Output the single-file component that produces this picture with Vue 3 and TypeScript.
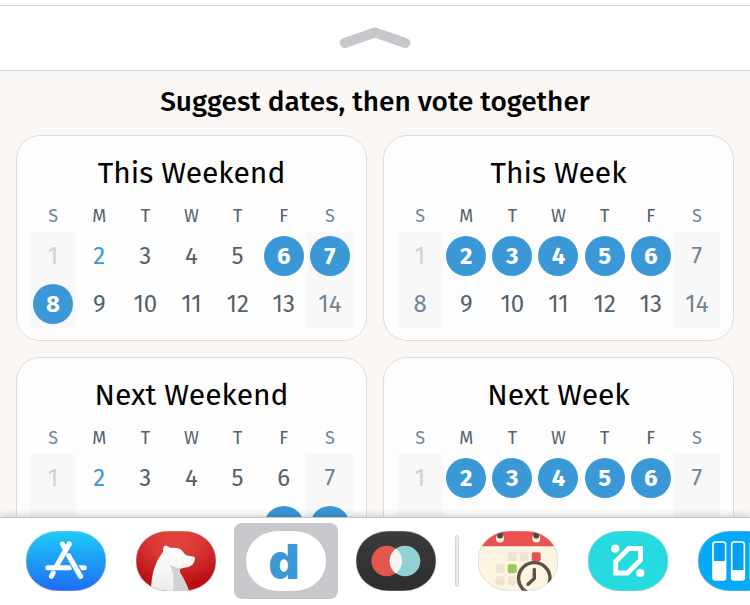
<script setup lang="ts">
interface Suggestion {
  title: string
  picked: number[]
  today?: number
}

const weekdays: string[] = ['S', 'M', 'T', 'W', 'T', 'F', 'S']
const weeks: number[][] = [
  [1, 2, 3, 4, 5, 6, 7],
  [8, 9, 10, 11, 12, 13, 14],
]
const suggestions: Suggestion[] = [
  { title: 'This Weekend', picked: [6, 7, 8], today: 2 },
  { title: 'This Week', picked: [2, 3, 4, 5, 6] },
  { title: 'Next Weekend', picked: [13, 14], today: 2 },
  { title: 'Next Week', picked: [2, 3, 4, 5, 6] },
]

const pill = 'M0 30C0 12 15 0 33 0H47C65 0 80 12 80 30C80 48 65 60 47 60H33C15 60 0 48 0 30Z'

function dayClass(s: Suggestion, day: number) {
  return {
    picked: s.picked.includes(day),
    today: s.today === day,
    past: day === 1,
  }
}
</script>

<template>
  <div class="screen">
    <header class="top">
      <button class="expand" type="button" aria-label="Expand">
        <svg width="72" height="24" viewBox="0 0 72 24">
          <path d="M5.700 17L36 6.500L66.300 17" fill="none" stroke="#c7c6cb" stroke-width="9.800" stroke-linecap="round" stroke-linejoin="round" />
        </svg>
      </button>
    </header>

    <main class="content">
      <h1>Suggest dates, then vote together</h1>
      <div class="cards">
        <section v-for="s in suggestions" :key="s.title" class="card">
          <h2>{{ s.title }}</h2>
          <table>
            <thead>
              <tr>
                <th v-for="(d, i) in weekdays" :key="i" scope="col">{{ d }}</th>
              </tr>
            </thead>
            <tbody>
              <tr v-for="(week, w) in weeks" :key="w">
                <td v-for="day in week" :key="day">
                  <span class="day" :class="dayClass(s, day)">{{ day }}</span>
                </td>
              </tr>
            </tbody>
          </table>
        </section>
      </div>
    </main>

    <nav class="dock" aria-label="Apps">
      <button class="app" type="button" aria-label="App Store">
        <svg viewBox="0 0 80 60">
          <defs>
            <linearGradient id="store" x1="0" y1="0" x2="0" y2="1">
              <stop offset="0" stop-color="#1dcdfb" />
              <stop offset="1" stop-color="#1f6bf2" />
            </linearGradient>
          </defs>
          <path :d="pill" fill="url(#store)" />
          <g fill="none" stroke="#fff" stroke-width="5" stroke-linecap="round">
            <path d="M21.800 36.700H43.500M53 36.700H58.300M36.500 13L39 17.500M43.200 13L30.500 35M27.200 42L25.400 45.200" />
            <path d="M41 21L55 46" stroke="#1f9bf7" stroke-width="7.400" stroke-linecap="butt" />
            <path d="M43.200 13L37 23.700M42.600 24.500L54.600 45.500" />
          </g>
          <path class="outline" :d="pill" />
        </svg>
      </button>
      <button class="app" type="button" aria-label="Bear">
        <svg viewBox="0 0 80 60">
          <defs>
            <radialGradient id="bear" cx=".5" cy=".15" r=".75">
              <stop offset="0" stop-color="#e5443e" />
              <stop offset=".45" stop-color="#d93733" />
              <stop offset="1" stop-color="#b90f16" />
            </radialGradient>
            <linearGradient id="fur" x1="0" y1="0" x2="0" y2="1">
              <stop offset="0" stop-color="#fff" />
              <stop offset="1" stop-color="#ececec" />
            </linearGradient>
            <clipPath id="clip"><path :d="pill" /></clipPath>
          </defs>
          <path :d="pill" fill="url(#bear)" />
          <g clip-path="url(#clip)">
            <path d="M15 60C15 44 19 31 27 21C27 17 27.500 15 29 14.500C31 14.500 33 16 34.500 17C39 16.200 44 17 46.500 20C48 22 49 23.500 51 24.500L58 25.800C60 27 58.500 31 57 33C54 36.500 49 36.500 45 37.500C42.500 38.500 44 42 46 45C49 50 51 55 53 60Z" fill="url(#fur)" />
            <path d="M31 30C34 35 39 36.500 45 37.500C42.500 38.500 44 42 46 45C49 50 51 55 53 60H37C38.500 49 38 38 31 30Z" fill="#d2d1d1" />
          </g>
          <path class="outline" :d="pill" />
        </svg>
      </button>
      <button class="app selected" type="button" aria-label="Dates" aria-pressed="true">
        <svg viewBox="0 0 80 60">
          <path :d="pill" fill="#fff" />
          <text class="logo" x="38" y="48" text-anchor="middle">d</text>
        </svg>
      </button>
      <button class="app" type="button" aria-label="Overlap">
        <svg viewBox="0 0 80 60">
          <defs>
            <linearGradient id="dark" x1="0" y1="0" x2="0" y2="1">
              <stop offset="0" stop-color="#3b3a3d" />
              <stop offset="1" stop-color="#2d2c2f" />
            </linearGradient>
          </defs>
          <path :d="pill" fill="url(#dark)" />
          <circle cx="30.700" cy="30" r="15.300" fill="#e1564f" />
          <circle cx="49" cy="30" r="15.300" fill="#90d2d3" />
          <path d="M39.850 17.700A15.300 15.300 0 0 1 39.850 42.300A15.300 15.300 0 0 1 39.850 17.700Z" fill="#f3f3f1" />
          <path class="outline" :d="pill" />
        </svg>
      </button>

      <span class="divider"></span>

      <button class="app" type="button" aria-label="Schedule">
        <svg viewBox="0 0 80 60">
          <g clip-path="url(#clip)">
            <rect width="80" height="60" fill="#fdf5e2" />
            <rect width="80" height="15" fill="#eb5150" />
            <rect y="15" width="80" height="1" fill="#e3d3c3" />
            <g fill="#fdf5e2">
              <circle cx="22" cy="7.500" r="4" />
              <circle cx="58.300" cy="7.500" r="4" />
            </g>
            <g fill="#51493f">
              <rect x="19.200" y="-3" width="5.600" height="10.500" rx="2" />
              <rect x="55.500" y="-3" width="5.600" height="10.500" rx="2" />
            </g>
            <g fill="#efe3d2">
              <rect x="29.700" y="21.300" width="9" height="9" rx="2" />
              <rect x="41.700" y="21.300" width="9" height="9" rx="2" />
              <rect x="17.700" y="33.300" width="9" height="9" rx="2" />
              <rect x="17.700" y="45.300" width="9" height="9" rx="2" />
              <rect x="29.700" y="45.300" width="9" height="9" rx="2" />
            </g>
            <rect x="53.700" y="21.300" width="9" height="9" rx="2" fill="#eb5150" />
            <rect x="29.700" y="33.300" width="9" height="9" rx="2" fill="#9cc958" />
            <circle cx="56.300" cy="47.300" r="15.700" fill="#fdf5e2" stroke="#5a5247" stroke-width="3.400" />
            <path d="M56.300 38.500V47.600L50 53.300" fill="none" stroke="#5a5247" stroke-width="3.400" stroke-linecap="round" stroke-linejoin="round" />
          </g>
          <path class="outline" :d="pill" />
        </svg>
      </button>
      <button class="app" type="button" aria-label="Sketch">
        <svg viewBox="0 0 80 60">
          <path :d="pill" fill="#26dbdf" />
          <path d="M40.700 17.500H52.500V29L39.500 42H27.700V30.500Z" fill="none" stroke="#fff" stroke-width="4.800" />
          <circle cx="27.300" cy="17.700" r="4.100" fill="#fff" />
          <circle cx="52.300" cy="42" r="4.100" fill="#fff" />
          <path class="outline" :d="pill" />
        </svg>
      </button>
      <button class="app" type="button" aria-label="Boards">
        <svg viewBox="0 0 80 60">
          <path :d="pill" fill="#04a9f8" />
          <g fill="#04a0ee" stroke="#fff" stroke-width="1.600">
            <rect x="15" y="11" width="12.600" height="38" rx="2.500" />
            <rect x="33.700" y="11" width="12.600" height="38" rx="2.500" />
            <rect x="52.400" y="11" width="12.600" height="38" rx="2.500" />
          </g>
          <g fill="#fff">
            <rect x="15" y="30" width="12.600" height="19" rx="1" />
            <rect x="33.700" y="39" width="12.600" height="10" rx="1" />
            <rect x="52.400" y="25" width="12.600" height="24" rx="1" />
          </g>
          <path class="outline" :d="pill" />
        </svg>
      </button>
    </nav>
  </div>
</template>

<style>
body {
  margin: 0;
}
</style>

<style scoped>
.screen {
  display: flex;
  flex-direction: column;
  height: 100vh;
  overflow: hidden;
  background: #fbf7f5;
  color: #000;
  font-family: 'Fira Sans', 'Noto Sans', sans-serif;
}
button {
  padding: 0;
  border: 0;
  background: none;
}
svg {
  display: block;
}
.top {
  flex: none;
  padding-top: 5px;
  border-bottom: 1px solid #d0d0d3;
  background: #fff;
}
.expand {
  display: flex;
  align-items: center;
  justify-content: center;
  width: 100%;
  height: 65px;
  border-top: 1px solid #d0d0d3;
}
.content {
  flex: 1;
  min-height: 0;
  overflow: hidden;
  padding: 0 16px;
}
h1 {
  margin: 0;
  padding: 11px 0 13px;
  font-size: 28px;
  font-weight: 500;
  line-height: 40px;
  text-align: center;
}
.cards {
  display: grid;
  grid-template-columns: 1fr 1fr;
  gap: 16px;
}
.card {
  padding: 16px 13px 12px;
  border: 1px solid #dddddf;
  border-radius: 24px;
  background: #fdfdfd;
}
h2 {
  margin: 0;
  font-size: 30px;
  font-weight: 400;
  line-height: 42px;
  text-align: center;
}
table {
  width: 100%;
  table-layout: fixed;
  border-collapse: collapse;
  color: #53626c;
}
th {
  height: 32px;
  padding: 6px 0 0;
  font-size: 18px;
  font-weight: 400;
  line-height: 24px;
}
td {
  height: 48px;
  padding: 0;
  font-size: 24px;
  text-align: center;
}
th:first-child,
th:last-child,
td:first-child,
td:last-child {
  color: #748591;
}
td:first-child,
td:last-child {
  background: #f8f8f8;
}
.day {
  display: block;
  width: 40px;
  margin: 0 auto;
  border-radius: 50%;
  line-height: 40px;
}
.past {
  color: #ccd2d6;
}
.today {
  color: #3998d5;
}
.picked {
  background: #3998d5;
  color: #fff;
  font-weight: 700;
}
.dock {
  position: relative;
  display: flex;
  flex: none;
  gap: 6px;
  overflow-x: clip;
  padding: 5px 14px 6px;
  border-top: 1px solid #c6c6c8;
  background: #fff;
  box-shadow: 0 -1px 8px rgba(0, 0, 0, 0.2);
}
.app {
  flex: none;
  padding: 8px 12px;
  border-radius: 8px;
}
.app svg {
  width: 80px;
  height: 60px;
}
.outline {
  fill: none;
  stroke: #c8c8c8;
  stroke-opacity: 0.6;
}
.selected {
  background: #c8c7cc;
}
.logo {
  fill: #3998d5;
  font-family: Inter, sans-serif;
  font-size: 48px;
  font-weight: 900;
}
.divider {
  flex: none;
  align-self: center;
  box-sizing: border-box;
  width: 4px;
  height: 52px;
  margin: 0 1px;
  border: 1px solid #d6d7df;
  border-radius: 2px;
  background: #e8e9f2;
}
</style>
